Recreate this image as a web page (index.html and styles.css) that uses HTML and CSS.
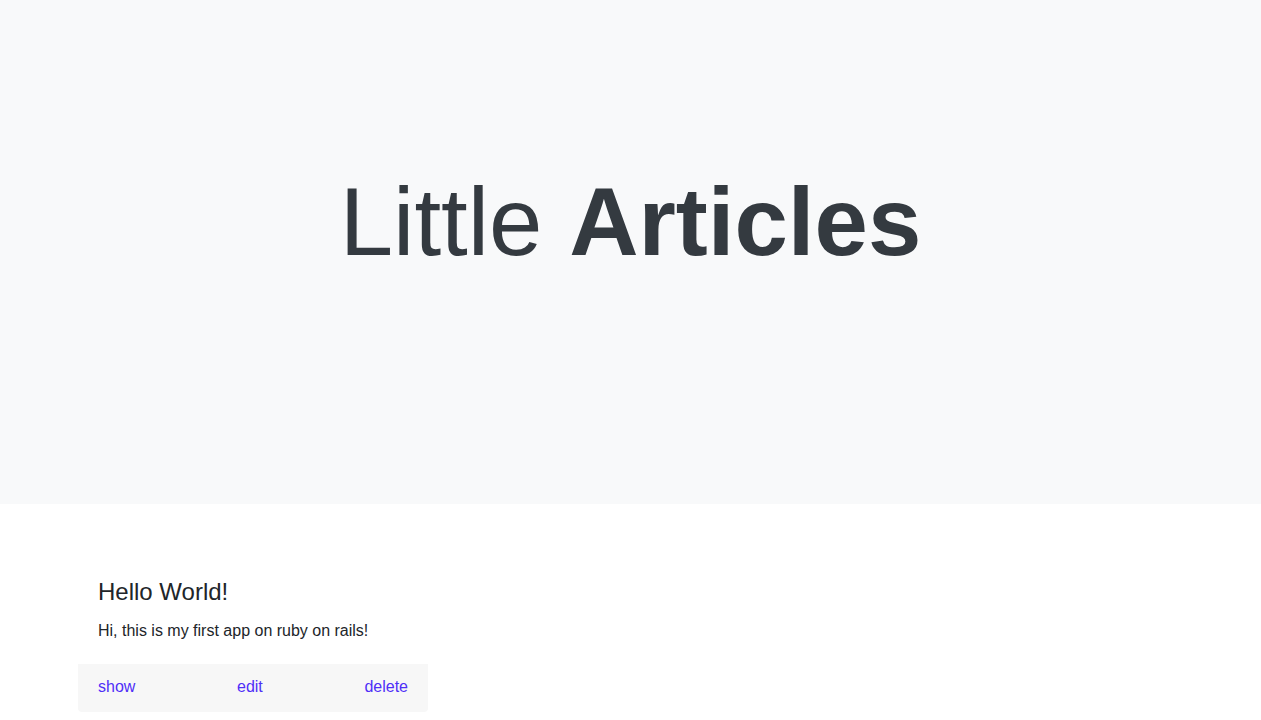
FILE: index.html
```html
<!DOCTYPE html>
<html lang="en">
<head>
<meta charset="utf-8">
<title>Little Articles</title>
<link rel="stylesheet" href="styles.css">
</head>
<body>
<header class="hero">
  <h1 class="hero-title">Little <strong>Articles</strong></h1>
</header>
<main class="content">
  <article class="card">
    <div class="card-body">
      <h4 class="card-title">Hello World!</h4>
      <p class="card-text">Hi, this is my first app on ruby on rails!</p>
    </div>
    <div class="card-footer">
      <a href="#" class="card-link">show</a>
      <a href="#" class="card-link">edit</a>
      <a href="#" class="card-link">delete</a>
    </div>
  </article>
</main>
</body>
</html>
```
FILE: styles.css
```css
* { box-sizing: border-box; }
html, body { margin: 0; padding: 0; }
body {
  font-family: "Liberation Sans", Arial, sans-serif;
  font-size: 16px;
  line-height: 1.5;
  color: #212529;
  background: #fff;
}
.hero {
  background: #f8f9fa;
  height: 504px;
  padding-top: 164px;
  text-align: center;
}
.hero-title {
  margin: 0;
  font-size: 96px;
  font-weight: 400;
  line-height: 1.2;
  color: #343a40;
}
.hero-title strong { font-weight: 700; }
.content {
  padding: 54px 78px 0;
}
.card {
  width: 350px;
  background: #fff;
  border-radius: 4px;
}
.card-body {
  padding: 20px 20px 21px;
}
.card-title {
  margin: 0 0 12px;
  font-size: 24px;
  font-weight: 400;
  line-height: 1.2;
}
.card-text { margin: 0; }
.card-footer {
  background: #f7f7f7;
  padding: 11px 20px 13px;
  display: flex;
  justify-content: space-between;
  border-radius: 0 0 4px 4px;
}
.card-link {
  color: #4f2ff7;
  text-decoration: none;
}
```
